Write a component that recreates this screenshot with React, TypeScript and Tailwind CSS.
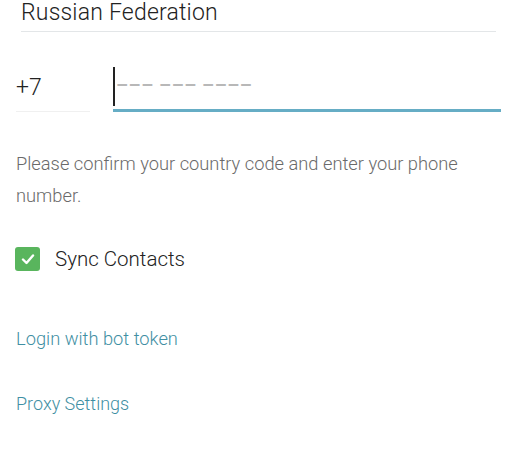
import React from "react";

export default function App() {
  return (
    <div
      className="w-[524px] h-[450px] bg-white overflow-hidden"
      style={{ fontFamily: "Roboto, 'Noto Sans', sans-serif" }}
    >
      <div className="pl-[21px] pr-[28px]">
        <div className="h-[33px] border-b border-[#e3e6e8] text-[23px] font-light leading-[26px] text-[#222] -mt-[1px] flex items-start">
          <span className="mt-[1px] tracking-[0.2px]">Russian Federation</span>
        </div>
      </div>
      <div className="flex pl-[16px] pr-[23px] mt-[33px] items-end">
        <div className="w-[74px] h-[45px] border-b border-[#f0f0f0] text-[23px] font-light text-[#222] leading-[26px] flex items-center pb-[2px]">
          +7
        </div>
        <div className="ml-[23px] flex-1 h-[47px] border-b-[3px] border-[#66adc5] flex items-center relative">
          <div className="w-[2px] h-[39px] bg-[#222] mt-[-1px]" />
          <span className="ml-[1px] mt-[-4px] text-[19px] font-bold tracking-[0.6px] text-[#b8b8b8] whitespace-pre">
            {"––– ––– ––––"}
          </span>
        </div>
      </div>
      <div className="pl-[16px] pr-[40px] mt-[36px] text-[18.3px] font-light leading-[32px] text-[#6a6a6a]">
        Please confirm your country code and enter your phone number.
      </div>
      <div className="flex items-center pl-[15px] mt-[32px]">
        <div className="w-[25px] h-[24px] rounded-[3px] bg-[#59b55d] flex items-center justify-center">
          <svg width="16" height="16" viewBox="0 0 16 16">
            <path d="M3 8.5 L6.5 12 L13 4.5" stroke="white" strokeWidth="2.4" fill="none" strokeLinecap="round" strokeLinejoin="round" />
          </svg>
        </div>
        <span className="ml-[15px] text-[20.5px] font-light text-[#222]">Sync Contacts</span>
      </div>
      <div className="pl-[16px] mt-[50px] text-[18.3px] font-light text-[#3f8fa3]">Login with bot token</div>
      <div className="pl-[16px] mt-[38px] text-[18px] font-light text-[#3f8fa3]">Proxy Settings</div>
    </div>
  );
}
